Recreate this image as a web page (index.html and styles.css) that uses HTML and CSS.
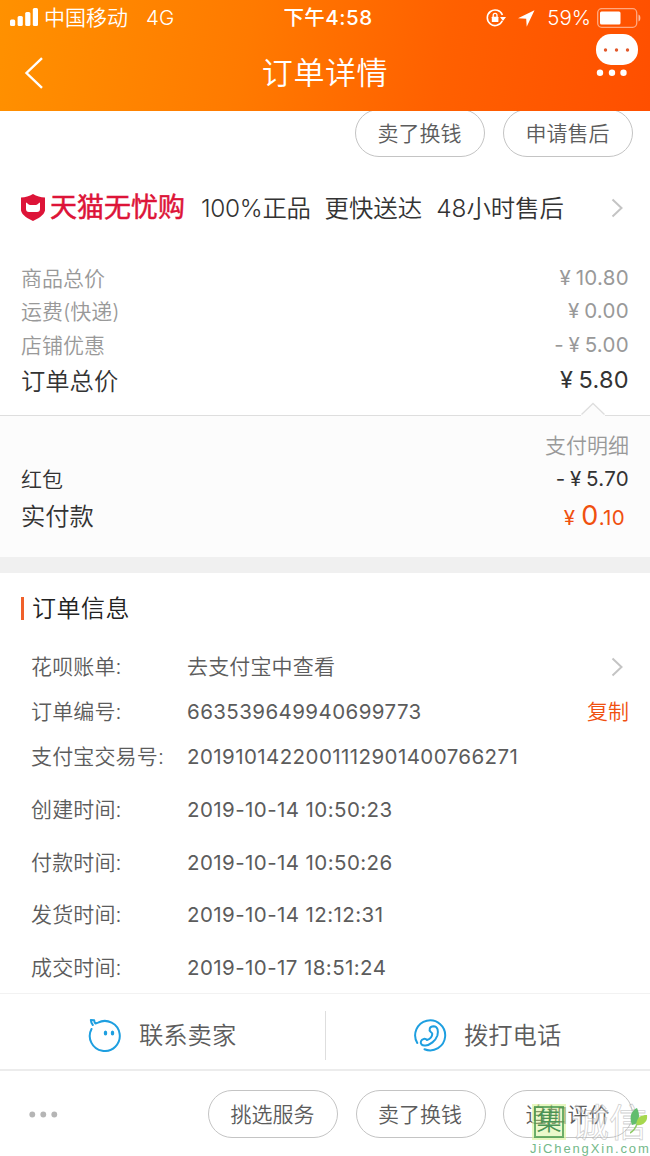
FILE: index.html
```html
<!DOCTYPE html>
<html lang="zh-CN">
<head>
<meta charset="utf-8">
<title>订单详情</title>
<link rel="stylesheet" href="styles.css">
</head>
<body>
<div class="screen">
  <header class="header">
    <div class="status">
      <div class="status-left">
        <svg class="signal" width="28" height="18" viewBox="0 0 28 18" fill="#fff"><rect x="0" y="11.5" width="5.2" height="6.5" rx="1.5"/><rect x="7.6" y="8" width="5.2" height="10" rx="1.5"/><rect x="15.2" y="4" width="5.2" height="14" rx="1.5"/><rect x="22.8" y="0" width="5.2" height="18" rx="1.5"/></svg>
        <span class="carrier">中国移动</span><span class="network">4G</span>
      </div>
      <div class="clock">下午4:58</div>
      <div class="status-right">
        <svg class="lock" width="20" height="18" viewBox="0 0 20 18" fill="none" stroke="#fff" stroke-width="1.6"><path d="M16.300 11.800A7.800 7.800 0 1 1 16.400 6"/><path d="M14 8h6l-3 4z" fill="#fff" stroke="none"/><rect x="5.800" y="7.700" width="6.600" height="5.300" rx=".6" fill="#fff" stroke="none"/><path d="M7.200 8V6.200a1.900 1.900 0 0 1 3.800 0V8" stroke-width="1.300"/></svg>
        <svg class="locate" width="17" height="17" viewBox="0 0 17 17"><path d="M16.500.3 0 8.200l8.200.5.5 8z" fill="#fff"/></svg>
        <span class="percent">59%</span>
        <svg class="battery" width="44" height="20" viewBox="0 0 44 20"><rect x=".7" y=".7" width="39" height="18.600" rx="4" fill="none" stroke="#fff" stroke-opacity=".5" stroke-width="1.300"/><rect x="3" y="3.500" width="20.500" height="13" rx="1.500" fill="#fff"/><path d="M41.500 6.500c2.500.8 2.500 6.200 0 7z" fill="#fff" fill-opacity=".6"/></svg>
      </div>
    </div>
    <div class="titlebar">
      <svg class="back" width="20" height="34" viewBox="0 0 20 34" fill="none" stroke="#fff" stroke-width="2.400"><path d="M18 2.200 2.500 17 18 31.800"/></svg>
      <h1 class="title">订单详情</h1>
      <svg class="more" width="42" height="44" viewBox="0 0 42 44"><rect width="42" height="31" rx="15" fill="#fff"/><g fill="#e2582a"><circle cx="9.500" cy="16" r="1.700"/><circle cx="20.500" cy="16" r="1.700"/><circle cx="31.500" cy="16" r="1.700"/></g><g fill="#fff"><circle cx="4" cy="38.700" r="3.200"/><circle cx="16" cy="38.700" r="3.200"/><circle cx="27.500" cy="38.700" r="3.200"/></g></svg>
    </div>
  </header>

  <div class="item-actions">
    <button class="pill">卖了换钱</button>
    <button class="pill">申请售后</button>
  </div>

  <div class="promise">
    <svg class="shield" width="24" height="27" viewBox="0 0 24 27"><path d="M12 0c3.800 2.300 7.500 3.300 12 3.500v13C23 21.500 17 24.500 12 27 7 24.500 1 21.500 0 16.500v-13C4.500 3.300 8.200 2.300 12 0z" fill="#dd1438"/><path d="M5 8.500c1.500 0 2 2.500 4 2.500h6c2 0 2.500-2.500 4-2.500V15q0 3-3 3H8q-3 0-3-3z" fill="#fff"/></svg>
    <span class="brand">天猫无忧购</span>
    <span class="point p1">100%正品</span>
    <span class="point p2">更快送达</span>
    <span class="point p3">48小时售后</span>
    <svg class="chevron" width="12" height="20" viewBox="0 0 12 20"><path d="M1.500 1.500 10.500 10l-9 8.500"/></svg>
  </div>

  <section class="totals">
    <div class="row"><span>商品总价</span><span class="price">¥ 10.80</span></div>
    <div class="row"><span>运费(快递)</span><span class="price">¥ 0.00</span></div>
    <div class="row"><span>店铺优惠</span><span class="price">- ¥ 5.00</span></div>
    <div class="row grand"><span>订单总价</span><span class="price">¥ 5.80</span></div>
  </section>

  <section class="payment">
    <svg class="notch" width="24" height="14" viewBox="0 0 24 14"><path d="M0 13 12 1.500 24 13v1H0z" fill="#fcfcfc"/><path d="M.5 12.500 12 1.500l11.500 11" fill="none" stroke="#dedede" stroke-width="1.300"/></svg>
    <div class="detail">支付明细</div>
    <div class="row dark"><span>红包</span><span class="price">- ¥ 5.70</span></div>
    <div class="row paid"><span>实付款</span><span class="due">¥ <b>0</b>.10</span></div>
  </section>

  <section class="info">
    <h2 class="info-title">订单信息</h2>
    <div class="field"><span class="label">花呗账单:</span><span class="cjk-value">去支付宝中查看</span><svg class="chevron" width="12" height="20" viewBox="0 0 12 20"><path d="M1.500 1.500 10.500 10l-9 8.500"/></svg></div>
    <div class="field"><span class="label">订单编号:</span><span class="value">663539649940699773</span><a class="copy">复制</a></div>
    <div class="field"><span class="label">支付宝交易号:</span><span class="value">2019101422001112901400766271</span></div>
    <div class="field time"><span class="label">创建时间:</span><span class="value">2019-10-14 10:50:23</span></div>
    <div class="field time"><span class="label">付款时间:</span><span class="value">2019-10-14 10:50:26</span></div>
    <div class="field time"><span class="label">发货时间:</span><span class="value">2019-10-14 12:12:31</span></div>
    <div class="field time"><span class="label">成交时间:</span><span class="value">2019-10-17 18:51:24</span></div>
  </section>

  <div class="contact">
    <div class="contact-item">
      <svg width="34" height="34" viewBox="0 0 34 34" fill="none" stroke="#1e9fe0" stroke-width="2" stroke-linecap="round" stroke-linejoin="round"><path d="M3.500 11A15 15 0 1 0 10 4.600L7.500 5.500Q6.300 4.500 6.200 2.300L2.800 2q.2 3 2 5"/><ellipse cx="17.500" cy="15" rx="1" ry="1.800" fill="#1e9fe0" stroke-width="1.500"/><ellipse cx="24.500" cy="15" rx="1" ry="1.800" fill="#1e9fe0" stroke-width="1.500"/></svg>
      <span>联系卖家</span>
    </div>
    <div class="contact-item second">
      <svg width="34" height="34" viewBox="0 0 34 34" fill="none" stroke="#1e9fe0" stroke-width="2" stroke-linecap="round" stroke-linejoin="round"><path d="M4.300 25A15 15 0 1 1 11.500 31.200"/><path d="M17.800 14C15.500 12 16.500 8.300 20.500 8.200c4.500.1 5 5 3.900 9.300C22.500 23 17 27 12.500 27.500c-3.500.5-5.500-1.800-4.500-4.300 1-2.700 4.500-3 6-1.200 3-1 5.200-3.500 5.300-6.300 0-.8-.8-1.200-1.500-1.700z"/></svg>
      <span>拨打电话</span>
    </div>
  </div>

  <footer class="footer">
    <svg class="dots" width="29" height="7" viewBox="0 0 29 7" fill="#b5b5b5"><circle cx="3.300" cy="3.500" r="2.900"/><circle cx="14.300" cy="3.500" r="2.900"/><circle cx="25.300" cy="3.500" r="2.900"/></svg>
    <div class="footer-buttons">
      <button class="pill">挑选服务</button>
      <button class="pill">卖了换钱</button>
      <button class="pill">追加评价</button>
    </div>
  </footer>

  <div class="watermark">
    <div class="mark-top"><span class="seal">集</span><span class="outline">诚信</span>
      <svg class="leaf" width="18" height="26" viewBox="0 0 18 26"><path d="M2 17C-1 9 1 3 7 0c3 6 2 10 1 15z" fill="#62bd6e"/><path d="M6 17C7 9 11 7 17 7c1 6-3 11-11 10z" fill="#a6d84f"/><path d="M7 16Q5 22 0 25" fill="none" stroke="#8fca68" stroke-width="1.500"/></svg>
    </div>
    <div class="domain">JiChengXin.com</div>
  </div>
</div>
</body>
</html>
```
FILE: styles.css
```css
* { box-sizing: border-box; }
body {
  margin: 0;
  background: #fff;
  font-family: Inter, "Noto Sans CJK SC", sans-serif;
  font-weight: 350;
  color: #333;
}
.screen {
  position: relative;
  width: 650px;
  height: 1156px;
  overflow: hidden;
  background: #fff;
}
svg { display: block; flex: none; }
h1, h2 { margin: 0; font-weight: 350; }
span, a, h1, h2, .clock { white-space: nowrap; }

.header {
  height: 111px;
  background: linear-gradient(100deg, #ff9100 0%, #ff7a00 38%, #ff6000 68%, #ff4f00 100%);
  color: #fff;
}
.status {
  display: grid;
  grid-template-columns: 1fr 100px 1fr;
  height: 36px;
  line-height: 36px;
  font-size: 20px;
}
.status-left { display: flex; padding-left: 10px; }
.signal { margin-top: 8px; }
.carrier { margin-left: 6px; font-size: 21px; }
.network { margin-left: 18px; font-size: 20.500px; }
.clock { font-size: 20.500px; font-weight: 500; text-align: center; letter-spacing: .5px; margin: 0 0 0 6px; }
.status-right { display: flex; align-items: center; justify-content: flex-end; padding-right: 9px; }
.locate { margin-left: 12px; }
.percent { margin-left: 12px; font-size: 20.500px; }
.battery { margin-left: 6px; }

.titlebar {
  display: grid;
  grid-template-columns: 100px 1fr 100px;
  height: 75px;
}
.back { margin: 20px 0 0 24px; }
.title { font-size: 31px; letter-spacing: .6px; line-height: 74px; text-align: center; }
.more { margin: -2px 0 0 46px; }

.item-actions {
  display: flex;
  justify-content: flex-end;
  gap: 18px;
  height: 46px;
  padding-right: 17px;
  overflow: hidden;
  align-items: flex-end;
}
.pill {
  flex: none;
  width: 130px;
  height: 48px;
  padding: 0 1px 0 0;
  border: 1px solid #c4c4c4;
  border-radius: 24px;
  background: transparent;
  color: #5c5c5c;
  font: inherit;
  font-size: 21px;
  line-height: 47px;
}

.promise {
  display: flex;
  align-items: center;
  height: 56px;
  margin-top: 23px;
  padding: 0 27px 0 21px;
  line-height: 56px;
  font-size: 24.400px;
}
.shield { margin-top: -2px; }
.brand {
  margin-left: 5px;
  color: #dd1438;
  font-weight: 400;
  font-size: 27px;
  -webkit-text-stroke: .5px #dd1438;
}
.p1 { margin-left: 16px; letter-spacing: -.3px; }
.p2, .p3 { margin-left: 14px; }
.chevron { margin-left: auto; fill: none; stroke: #c4c4c4; stroke-width: 2; }

.totals { padding: 26px 21px 0; height: 179px; color: #999; }
.row {
  display: flex;
  justify-content: space-between;
  height: 33.300px;
  line-height: 33px;
  font-size: 21px;
}
.row .price { font-size: 20.500px; font-weight: 400; letter-spacing: .3px; word-spacing: -1.500px; margin-top: -1px; }
.grand { height: 38px; line-height: 39px; font-size: 24.300px; color: #333; }
.row.grand .price { font-size: 23.500px; margin-top: -2px; }

.payment {
  position: relative;
  height: 158px;
  padding: 13px 21px 0;
  border-top: 1px solid #dedede;
  border-bottom: 16px solid #f0f0f0;
  background: #fcfcfc;
}
.notch { position: absolute; right: 45px; top: -14px; }
.detail { height: 33.500px; line-height: 33px; font-size: 21px; color: #999; text-align: right; }
.dark { color: #333; line-height: 34px; }
.paid { height: 38px; line-height: 40px; font-size: 24.300px; }
.due { margin-right: 4px; color: #f0500f; font-size: 20.500px; font-weight: 400; letter-spacing: .3px; }
.due b { font-weight: 400; font-size: 27px; }

.info { height: 420px; padding: 24px 21px 0; color: #5c5c5c; }
.info-title {
  height: 23px;
  padding-left: 8px;
  border-left: 3px solid #f0602a;
  font-size: 24px;
  line-height: 24px;
  letter-spacing: .5px;
  color: #222;
}
.field {
  display: flex;
  align-items: center;
  height: 45px;
  padding: 0 0 0 10px;
  line-height: 46px;
  font-size: 21px;
}
.info-title + .field { margin-top: 24px; }
.field.time { height: 52.500px; line-height: 53px; }
.field:nth-child(5) { margin-top: 4.500px; }
.label { width: 156px; flex: none; }
.label, .cjk-value { letter-spacing: .15px; }
.value { font-size: 20.500px; font-weight: 400; letter-spacing: .42px; }
.copy { margin-left: auto; color: #f0500f; }
.field .chevron { margin-right: 6px; }

.contact {
  display: grid;
  grid-template-columns: 325px 325px;
  align-items: center;
  height: 78px;
  border-top: 1px solid #f2f2f2;
  border-bottom: 2px solid #ececec;
  color: #5c5c5c;
  font-size: 24.300px;
  line-height: 49px;
}
.contact-item { display: flex; align-items: center; gap: 17px; height: 49px; padding-left: 88px; margin-top: 8px; }
.contact-item svg { margin-top: -2px; }
.second { border-left: 1px solid #dedede; padding-left: 87px; }

.footer {
  display: flex;
  justify-content: space-between;
  height: 85px;
  padding: 19px 17px 0 29px;
}
.dots { margin-top: 21px; }
.footer-buttons { display: flex; gap: 17.500px; }

.watermark { position: absolute; left: 530px; top: 1106px; width: 120px; }
.mark-top { display: flex; position: relative; }
.seal {
  width: 30px;
  height: 32px;
  margin-left: 4px;
  border: 2px solid rgba(75, 155, 80, .8);
  outline: 2px solid rgba(215, 242, 150, .6);
  background: rgba(205, 240, 125, .4);
  color: #4b9455;
  font-size: 25px;
  line-height: 27px;
  text-align: center;
}
.outline {
  margin-left: 7px;
  font-size: 38px;
  line-height: 32px;
  font-weight: 400;
  color: rgba(255, 255, 255, .4);
  -webkit-text-stroke: .8px rgba(160, 160, 160, .5);
}
.leaf { position: absolute; right: 2px; top: 2px; }
.domain {
  margin-top: 3px;
  color: #74b98a;
  font-family: "Liberation Sans", sans-serif;
  font-size: 13px;
  letter-spacing: 1.850px;
  line-height: 16px;
  font-weight: 400;
  white-space: nowrap;
}
```
